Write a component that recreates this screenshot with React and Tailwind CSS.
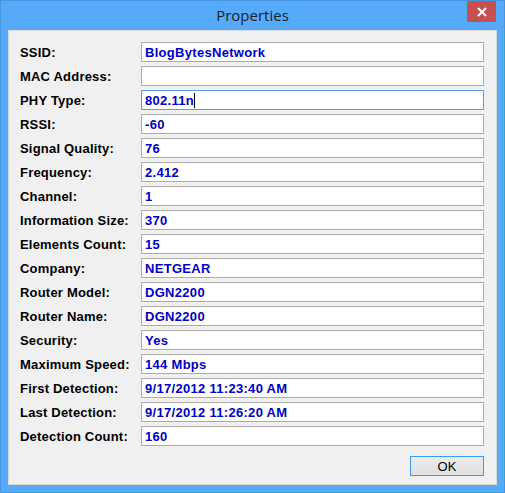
const rows = [
  ['SSID:', 'BlogBytesNetwork'],
  ['MAC Address:', ''],
  ['PHY Type:', '802.11n'],
  ['RSSI:', '-60'],
  ['Signal Quality:', '76'],
  ['Frequency:', '2.412'],
  ['Channel:', '1'],
  ['Information Size:', '370'],
  ['Elements Count:', '15'],
  ['Company:', 'NETGEAR'],
  ['Router Model:', 'DGN2200'],
  ['Router Name:', 'DGN2200'],
  ['Security:', 'Yes'],
  ['Maximum Speed:', '144 Mbps'],
  ['First Detection:', '9/17/2012 11:23:40 AM'],
  ['Last Detection:', '9/17/2012 11:26:20 AM'],
  ['Detection Count:', '160'],
];

export default function App() {
  return (
    <div className="w-[505px] h-[493px] bg-[#55abfa] border border-[#4a95dc] flex flex-col">
      {/* Title bar */}
      <div className="relative h-[29px] flex items-center justify-center">
        <span className="text-[15px] text-[#1e1e1e] font-['Open_Sans','Noto_Sans',sans-serif] -mt-[1px]">
          Properties
        </span>
        <button className="absolute top-0 right-[8px] w-[29px] h-[21px] bg-[#c75050] flex items-center justify-center">
          <svg width="10" height="10" viewBox="0 0 10 10">
            <path d="M1 1 L9 9 M9 1 L1 9" stroke="white" strokeWidth="2" />
          </svg>
        </button>
      </div>

      {/* Client area */}
      <div className="mx-[7px] h-[455px] bg-[#f0f0f0] border border-[#d9d9d9] pt-[11px] pl-[11px] pr-[12px] flex flex-col font-['Liberation_Sans',Arial,sans-serif]">
        <div className="flex flex-col gap-[4px]">
          {rows.map(([label, value], i) => (
            <div key={label} className="flex items-center h-[20px]">
              <div className="w-[121px] text-[13px] font-bold text-black leading-none tracking-[0.2px]">{label}</div>
              <div
                className={
                  'flex-1 h-[20px] bg-white border flex items-center pl-[3px] ' +
                  (i === 2 ? 'border-[#5a9ee0]' : 'border-[#ababab]')
                }
              >
                <span className="text-[13px] font-bold text-[#0000c8] leading-none tracking-[0.3px]">{value}</span>
                {i === 2 && <span className="w-[1px] h-[15px] bg-black"></span>}
              </div>
            </div>
          ))}
        </div>
        <div className="flex justify-end mt-[10px]">
          <button className="w-[74px] h-[20px] border border-[#3c9ae8] bg-gradient-to-b from-[#ececec] to-[#e0e0e0] text-[13px] text-black leading-none flex items-center justify-center">
            OK
          </button>
        </div>
      </div>
    </div>
  );
}
